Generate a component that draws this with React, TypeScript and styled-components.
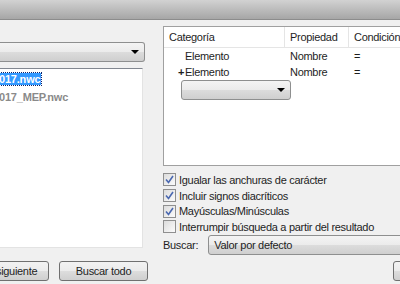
import React from 'react'
import styled, { createGlobalStyle } from 'styled-components'

const GlobalStyle = createGlobalStyle`
  html, body {
    margin: 0;
    padding: 0;
    width: 400px;
    height: 284px;
    overflow: hidden;
    background: #f0f0f0;
  }
  body {
    font-family: "Liberation Sans", Arial, sans-serif;
    font-size: 11px;
    letter-spacing: -0.3px;
    color: #1e1e1e;
  }
`

const Dialog = styled.div`
  width: 400px;
  height: 284px;
  display: flex;
  flex-direction: column;
  overflow: hidden;
`

const TitleBar = styled.div`
  height: 19px;
  flex: none;
  background: linear-gradient(#d2d2d2, #a6a6a6);
  border-bottom: 1px solid #8c8c8c;
`

const Body = styled.div`
  display: flex;
  gap: 18px;
  flex: 1;
`

const LeftCol = styled.div`
  width: 145px;
  flex: none;
  display: flex;
  flex-direction: column;
  padding-top: 22px;
`

const RightCol = styled.div`
  width: 280px;
  flex: none;
  display: flex;
  flex-direction: column;
  padding-top: 6px;
`

const Combo = styled.div<{ $width?: number }>`
  position: relative;
  height: 18px;
  width: ${p => (p.$width ? `${p.$width}px` : 'auto')};
  border: 1px solid #8e8f8f;
  border-radius: 3px;
  background: linear-gradient(#f4f4f4 0%, #ebebeb 50%, #dcdcdc 51%, #cfcfcf 100%);
  display: flex;
  align-items: center;
  justify-content: flex-end;
  padding-right: 5px;
`

const LeftCombo = styled(Combo)`
  margin-left: -4px;
  border-left: none;
  border-radius: 0 3px 3px 0;
`

const Arrow = styled.span`
  width: 0;
  height: 0;
  border-left: 4px solid transparent;
  border-right: 4px solid transparent;
  border-top: 4px solid #000;
`

const ListBox = styled.div`
  margin-top: 6px;
  height: 174px;
  margin-right: 2px;
  background: #fff;
  border-top: 1px solid #828790;
  border-bottom: 1px solid #e3e3e3;
  border-right: 1px solid #e3e3e3;
  padding-top: 4px;
  overflow: hidden;
`

const ListItem = styled.div<{ $selected?: boolean }>`
  height: 12px;
  line-height: 12px;
  margin-bottom: 6px;
  font-weight: bold;
  font-size: 11px;
  letter-spacing: -0.2px;
  margin-left: -1px;
  width: max-content;
  padding-right: 1px;
  color: ${p => (p.$selected ? '#fff' : '#8a8a8a')};
  background: ${p => (p.$selected ? '#3399ff' : 'transparent')};
  outline: ${p => (p.$selected ? '1px dotted #0a246a' : 'none')};
`

const ButtonRow = styled.div`
  display: flex;
  gap: 10px;
  margin-top: 13px;
`

const Button = styled.div<{ $width: number; $offset?: number }>`
  width: ${p => p.$width}px;
  margin-left: ${p => p.$offset ?? 0}px;
  height: 18px;
  flex: none;
  border: 1px solid #707070;
  border-radius: 3px;
  background: linear-gradient(#f2f2f2 0%, #ebebeb 50%, #dddddd 51%, #cfcfcf 100%);
  display: flex;
  align-items: center;
  justify-content: center;
  color: #1e1e1e;
  white-space: nowrap;
`

const Table = styled.div`
  height: 138px;
  background: #fff;
  border: 1px solid #a0a0a0;
  border-right: none;
`

const Row = styled.div<{ $header?: boolean }>`
  display: grid;
  grid-template-columns: 121px 64px 1fr;
  height: ${p => (p.$header ? 20 : 16)}px;
  align-items: center;
  border-bottom: ${p => (p.$header ? '1px solid #e5e5e5' : 'none')};
`

const Cell = styled.div<{ $header?: boolean; $indent?: number }>`
  height: 100%;
  display: flex;
  align-items: center;
  padding-left: ${p => p.$indent ?? 5}px;
  border-right: ${p => (p.$header ? '1px solid #e5e5e5' : 'none')};
`

const Plus = styled.span`
  width: 7px;
  font-weight: bold;
  margin-left: -7px;
`

const TableComboWrap = styled.div`
  padding: 0 0 0 17px;
`

const Checks = styled.div`
  margin-top: 6px;
  display: flex;
  flex-direction: column;
`

const CheckRow = styled.label`
  display: flex;
  align-items: center;
  gap: 3px;
  height: 15.7px;
  white-space: nowrap;
`

const Box = styled.span`
  width: 11px;
  height: 11px;
  border: 1px solid #8f8f8f;
  background: linear-gradient(135deg, #dcdcdc, #fbfbfb);
  display: flex;
  align-items: center;
  justify-content: center;
`

const SearchRow = styled.div`
  display: flex;
  align-items: center;
  margin-top: 0;
  gap: 10px;
`

const SearchCombo = styled(Combo)`
  flex: 1;
  justify-content: flex-start;
  padding-left: 5px;
`

const BottomRight = styled.div`
  margin-top: 6px;
  display: flex;
  padding-left: 230px;
`

const Check = ({ checked }: { checked: boolean }) => (
  <Box>
    {checked && (
      <svg width="9" height="9" viewBox="0 0 9 9">
        <path d="M1 4.5 L3.5 7.5 L8 1" fill="none" stroke="#4a68b0" strokeWidth="1.6" />
      </svg>
    )}
  </Box>
)

const options = [
  { label: 'Igualar las anchuras de carácter', checked: true },
  { label: 'Incluir signos diacríticos', checked: true },
  { label: 'Mayúsculas/Minúsculas', checked: true },
  { label: 'Interrumpir búsqueda a partir del resultado', checked: false },
]

export default function App() {
  return (
    <>
      <GlobalStyle />
      <Dialog>
        <TitleBar />
        <Body>
          <LeftCol>
            <LeftCombo>
              <Arrow />
            </LeftCombo>
            <ListBox>
              <ListItem $selected>017.nwc</ListItem>
              <ListItem>017_MEP.nwc</ListItem>
            </ListBox>
            <ButtonRow>
              <Button $width={98} $offset={-51}>Buscar siguiente</Button>
              <Button $width={87}>Buscar todo</Button>
            </ButtonRow>
          </LeftCol>
          <RightCol>
            <Table>
              <Row $header>
                <Cell $header>Categoría</Cell>
                <Cell $header>Propiedad</Cell>
                <Cell>Condición</Cell>
              </Row>
              <Row>
                <Cell $indent={21}>Elemento</Cell>
                <Cell>Nombre</Cell>
                <Cell>=</Cell>
              </Row>
              <Row>
                <Cell $indent={21}>
                  <Plus>+</Plus>Elemento
                </Cell>
                <Cell>Nombre</Cell>
                <Cell>=</Cell>
              </Row>
              <TableComboWrap>
                <Combo $width={103}>
                  <Arrow />
                </Combo>
              </TableComboWrap>
            </Table>
            <Checks>
              {options.map(o => (
                <CheckRow key={o.label}>
                  <Check checked={o.checked} />
                  {o.label}
                </CheckRow>
              ))}
            </Checks>
            <SearchRow>
              <span>Buscar:</span>
              <SearchCombo>Valor por defecto</SearchCombo>
            </SearchRow>
            <BottomRight>
              <Button $width={80}>Cancelar</Button>
            </BottomRight>
          </RightCol>
        </Body>
      </Dialog>
    </>
  )
}
